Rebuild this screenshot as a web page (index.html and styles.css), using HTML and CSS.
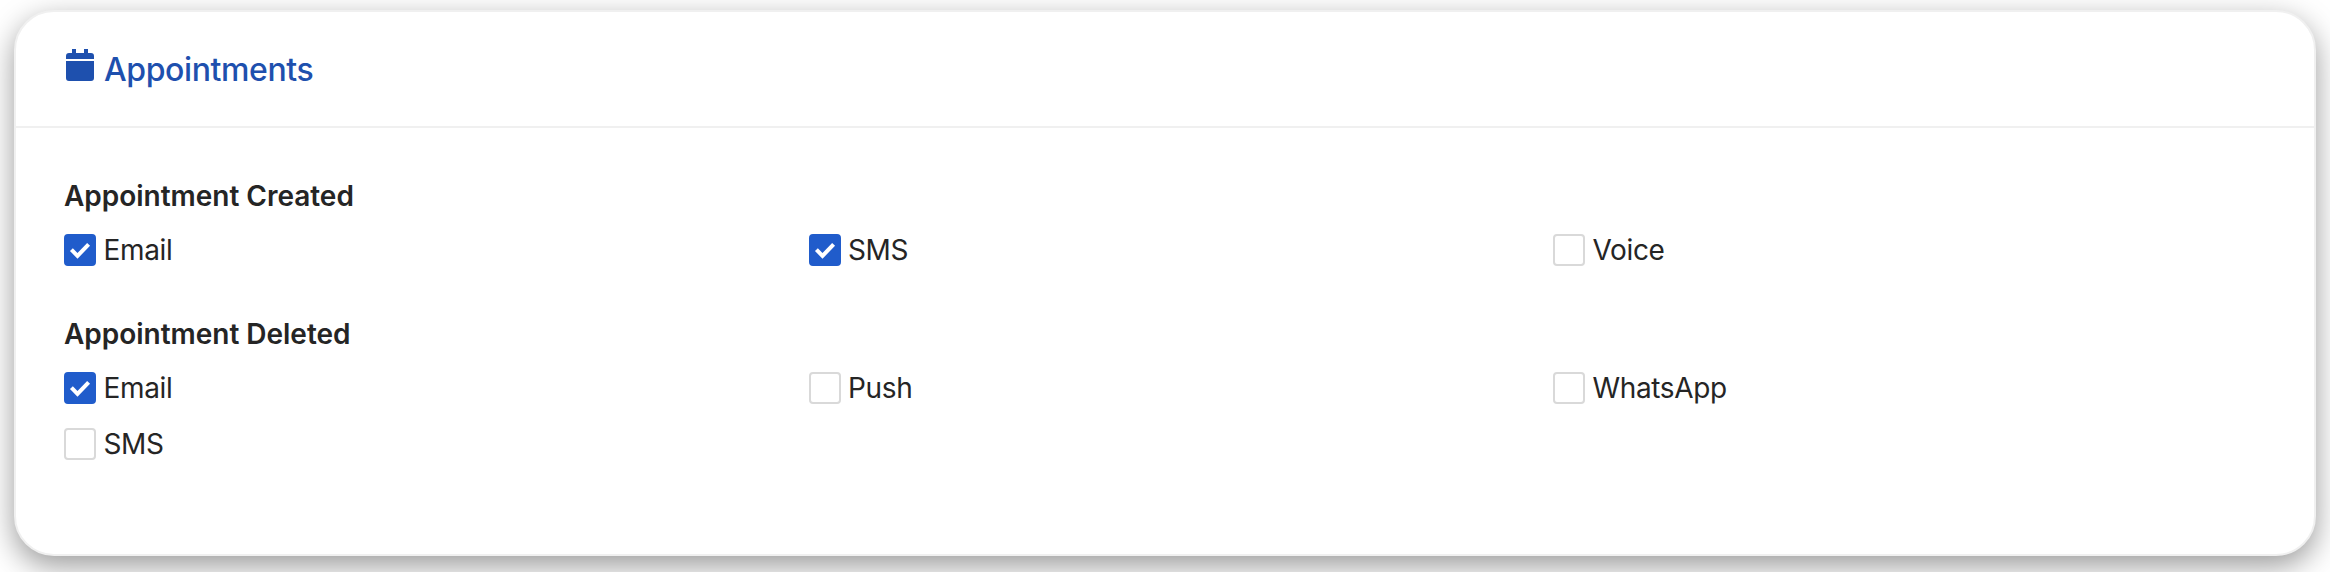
FILE: index.html
```html
<!DOCTYPE html>
<html lang="en">
<head>
<meta charset="utf-8">
<title>Appointments</title>
<link rel="stylesheet" href="styles.css">
</head>
<body>
<section class="card">
  <header class="card-header">
    <svg class="icon" width="28" height="32" viewBox="0 0 28 32" aria-hidden="true"><path d="M0 10V7a3 3 0 0 1 3-3h3V0h4v4h8V0h4v4h3a3 3 0 0 1 3 3v3zM0 12h28v17a3 3 0 0 1-3 3H3a3 3 0 0 1-3-3z" fill="currentColor"/></svg>
    <h2 class="title">Appointments</h2>
  </header>
  <div class="card-body">
    <div class="group">
      <h3 class="group-title">Appointment Created</h3>
      <div class="options">
        <label class="option"><input class="check" type="checkbox" checked><svg class="tick" viewBox="0 0 32 32"><path d="M7.4 15.6 13.5 21.9 24.6 10.3"/></svg><span>Email</span></label>
        <label class="option"><input class="check" type="checkbox" checked><svg class="tick" viewBox="0 0 32 32"><path d="M7.4 15.6 13.5 21.9 24.6 10.3"/></svg><span>SMS</span></label>
        <label class="option"><input class="check" type="checkbox"><span>Voice</span></label>
      </div>
    </div>
    <div class="group">
      <h3 class="group-title">Appointment Deleted</h3>
      <div class="options">
        <label class="option"><input class="check" type="checkbox" checked><svg class="tick" viewBox="0 0 32 32"><path d="M7.4 15.6 13.5 21.9 24.6 10.3"/></svg><span>Email</span></label>
        <label class="option"><input class="check" type="checkbox"><span>Push</span></label>
        <label class="option"><input class="check" type="checkbox"><span>WhatsApp</span></label>
        <label class="option"><input class="check" type="checkbox"><span>SMS</span></label>
      </div>
    </div>
  </div>
</section>
</body>
</html>
```
FILE: styles.css
```css
* { box-sizing: border-box; }
html { background: #fff; }
body {
  margin: 0;
  height: 572px;
  padding: 10px 14px 16px;
  overflow: hidden;
  font-family: Inter, "Liberation Sans", sans-serif;
  color: #252525;
}
.card {
  height: 546px;
  border: 2px solid #f0f0f0;
  border-radius: 40px;
  background: #fff;
  box-shadow: 0 10px 30px rgba(0, 0, 0, .4);
}
.card-header {
  display: flex;
  align-items: center;
  gap: 10px;
  height: 116px;
  padding: 0 50px;
  border-bottom: 2px solid #f0f0f0;
  color: #1e50ae;
}
.icon { margin-bottom: 8px; }
.title {
  margin: 0;
  padding-top: 2px;
  font-size: 32px;
  line-height: 44px;
  font-weight: 500;
  letter-spacing: -0.4px;
}
.card-body {
  display: flex;
  flex-direction: column;
  gap: 46px;
  padding: 46px 20px 0 48px;
}
.group-title {
  margin: 0 0 16px;
  font-size: 28px;
  line-height: 44px;
  font-weight: 600;
  letter-spacing: -0.02px;
}
.options {
  display: grid;
  grid-template-columns: repeat(3, 744.5px);
  row-gap: 24px;
}
.option {
  position: relative;
  display: flex;
  align-items: center;
  gap: 7.5px;
  height: 32px;
  font-size: 28px;
  line-height: 32px;
  letter-spacing: -0.35px;
}
.check {
  appearance: none;
  width: 32px;
  height: 32px;
  margin: 0;
  border: 2px solid #d9d9d9;
  border-radius: 4px;
  background: #fff;
}
.check:checked { border-color: #205ccb; background: #205ccb; }
.tick {
  position: absolute;
  left: 0;
  top: 0;
  width: 32px;
  height: 32px;
  fill: none;
  stroke: #fff;
  stroke-width: 4;
}
```
